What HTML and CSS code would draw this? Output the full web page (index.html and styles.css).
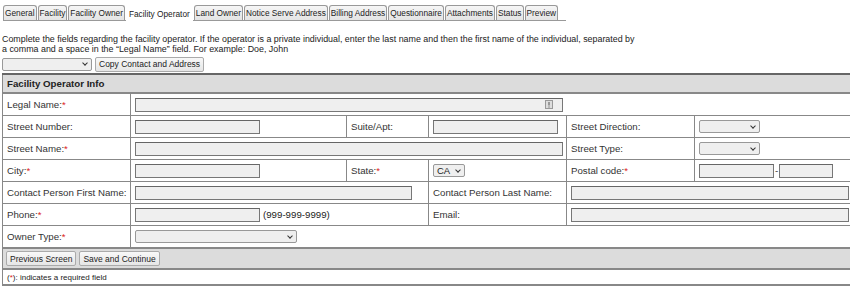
FILE: index.html
```html
<!DOCTYPE html>
<html>
<head>
<meta charset="utf-8">
<link rel="stylesheet" href="styles.css">
</head>
<body>
<div class="tabs">
  <span class="tab">General</span><span class="tab">Facility</span><span class="tab">Facility Owner</span><span class="tab active">Facility Operator</span><span class="tab">Land Owner</span><span class="tab">Notice Serve Address</span><span class="tab">Billing Address</span><span class="tab">Questionnaire</span><span class="tab">Attachments</span><span class="tab">Status</span><span class="tab">Preview</span>
</div>
<p class="intro">Complete the fields regarding the facility operator. If the operator is a private individual, enter the last name and then the first name of the individual, separated by<br>a comma and a space in the “Legal Name” field. For example: Doe, John</p>
<div class="copyrow">
  <span class="sel w90"><span class="chev"></span></span><span class="btn">Copy Contact and Address</span>
</div>
<table class="form">
  <colgroup><col class="c1"><col class="c2"><col class="c3"><col class="c4"><col class="c5"><col class="c6"></colgroup>
  <tr class="head"><th colspan="6">Facility Operator Info</th></tr>
  <tr>
    <td class="lbl">Legal Name:<span class="req">*</span></td>
    <td colspan="5" class="fld"><span class="inp w428"><svg class="bang" width="8" height="9" viewBox="0 0 8 9"><rect x="0.5" y="0.5" width="7" height="8" fill="#ddd" stroke="#999"/><rect x="3.5" y="2" width="1" height="3.5" fill="#555"/><rect x="3.5" y="6.5" width="1" height="1" fill="#555"/></svg></span></td>
  </tr>
  <tr>
    <td class="lbl">Street Number:</td>
    <td class="fld"><span class="inp w124"></span></td>
    <td class="lbl">Suite/Apt:</td>
    <td class="fld"><span class="inp w124"></span></td>
    <td class="lbl">Street Direction:</td>
    <td class="fld"><span class="sel w60"><span class="chev"></span></span></td>
  </tr>
  <tr>
    <td class="lbl">Street Name:<span class="req">*</span></td>
    <td colspan="3" class="fld"><span class="inp w428"></span></td>
    <td class="lbl">Street Type:</td>
    <td class="fld"><span class="sel w60"><span class="chev"></span></span></td>
  </tr>
  <tr>
    <td class="lbl">City:<span class="req">*</span></td>
    <td class="fld"><span class="inp w124"></span></td>
    <td class="lbl">State:<span class="req">*</span></td>
    <td class="fld"><span class="sel w31"><span class="val">CA</span><span class="chev"></span></span></td>
    <td class="lbl">Postal code:<span class="req">*</span></td>
    <td class="fld"><span class="inp w74"></span><span class="dash">-</span><span class="inp w53"></span></td>
  </tr>
  <tr>
    <td class="lbl">Contact Person First Name:</td>
    <td colspan="2" class="fld"><span class="inp w276"></span></td>
    <td class="lbl">Contact Person Last Name:</td>
    <td colspan="2" class="fld"><span class="inp w278"></span></td>
  </tr>
  <tr>
    <td class="lbl">Phone:<span class="req">*</span></td>
    <td colspan="2" class="fld"><span class="inp w124"></span><span class="fmt">(999-999-9999)</span></td>
    <td class="lbl">Email:</td>
    <td colspan="2" class="fld"><span class="inp w278"></span></td>
  </tr>
  <tr>
    <td class="lbl">Owner Type:<span class="req">*</span></td>
    <td colspan="5" class="fld"><span class="sel w161"><span class="chev"></span></span></td>
  </tr>
  <tr class="actions">
    <td colspan="6"><span class="btn">Previous Screen</span><span class="btn">Save and Continue</span></td>
  </tr>
  <tr class="note">
    <td colspan="6">(<span class="req">*</span>): indicates a required field</td>
  </tr>
</table>
</body>
</html>
```

FILE: styles.css
```css
html, body {
  margin: 0;
  padding: 0;
  background: #fff;
  overflow: hidden;
}
body {
  padding: 5px 2px 0 2px;
  font-family: "Liberation Sans", Arial, sans-serif;
  font-size: 9px;
  color: #222;
  width: 880px;
}
.tabs {
  display: flex;
  height: 15px;
  margin-left: 1px;
  width: 563px;
  border-bottom: 1px solid #999;
  white-space: nowrap;
}
.tab {
  display: inline-flex;
  align-items: center;
  height: 14px;
  padding: 0 1px;
  margin-right: 1px;
  border: 1px solid #999;
  border-bottom: none;
  border-radius: 3px 3px 0 0;
  background: linear-gradient(#f6f6f6, #e4e4e4);
  color: #222;
  font-size: 8.3px;
  line-height: 14px;
  white-space: nowrap;
}
.tab.active {
  background: #fff;
  border-color: transparent;
  padding: 0 2px;
  height: 15px;
  margin-bottom: -1px;
}
.intro {
  margin: 13px 0 0 0;
  line-height: 10px;
  font-size: 8.9px;
  color: #222;
}
.copyrow {
  display: flex;
  align-items: center;
  gap: 3px;
  margin-top: 3px;
  height: 14px;
}
.btn {
  display: inline-flex;
  align-items: center;
  height: 13px;
  padding: 0 3px;
  border: 1px solid #aaa;
  border-radius: 2px;
  background: linear-gradient(#f8f8f8, #e6e6e6);
  color: #222;
  font-size: 8.5px;
}
.sel {
  display: inline-flex;
  align-items: center;
  justify-content: space-between;
  box-sizing: border-box;
  height: 13px;
  padding: 0 4px 0 3px;
  border: 1px solid #999;
  border-radius: 2px;
  background: #efefef;
  vertical-align: middle;
}
.sel .val { font-size: 9.5px; color: #222; }
.chev {
  width: 3px;
  height: 3px;
  border-right: 1.5px solid #333;
  border-bottom: 1.5px solid #333;
  transform: rotate(45deg);
  margin: -2px 0 0 auto;
}
.w90 { width: 90px; }
.w60 { width: 61px; }
.w31 { width: 32px; }
.w161 { width: 162px; }
table.form {
  margin-top: 2px;
  border-collapse: collapse;
  table-layout: fixed;
  width: 860px;
  border-top: 2px solid #666;
  border-bottom: 2px solid #888;
}
col.c1 { width: 128px; }
col.c2 { width: 216px; }
col.c3 { width: 82px; }
col.c4 { width: 138px; }
col.c5 { width: 128px; }
col.c6 { width: 168px; }
tr.head th {
  background: #dcdcdc;
  text-align: left;
  font-weight: bold;
  font-size: 9.7px;
  height: 17px;
  padding: 0 0 0 4px;
  color: #222;
  border-bottom: 2px solid #888;
  border-left: 1px solid #888;
}
td {
  height: 21px;
  padding: 0 0 0 4px;
  border: 1px solid #888;
  vertical-align: middle;
  white-space: nowrap;
  color: #333;
  font-size: 9.7px;
}
td.fld { padding-left: 4px; }
td.lbl { color: #333; }
.req { color: #d22; }
.inp {
  display: inline-block;
  position: relative;
  box-sizing: border-box;
  height: 14px;
  border: 1px solid #777;
  border-top-color: #666;
  background: #efefef;
  vertical-align: middle;
}
.w428 { width: 428px; }
.w124 { width: 125px; }
.w74 { width: 75px; }
.w53 { width: 54px; }
.w276 { width: 277px; }
.w278 { width: 278px; }
.bang {
  position: absolute;
  right: 9px;
  top: 1px;
}
.dash { margin: 0 1px; vertical-align: middle; }
.fmt { margin-left: 3px; vertical-align: middle; color: #222; }
tr.actions td {
  background: #dcdcdc;
  height: 19px;
  padding-left: 3px;
  border-top: 2px solid #888;
  border-bottom: 2px solid #888;
}
tr.actions .btn { margin-right: 3px; height: 13px; }
tr.note td {
  height: 14px;
  font-size: 8px;
  padding-left: 4px;
  color: #222;
}
```
